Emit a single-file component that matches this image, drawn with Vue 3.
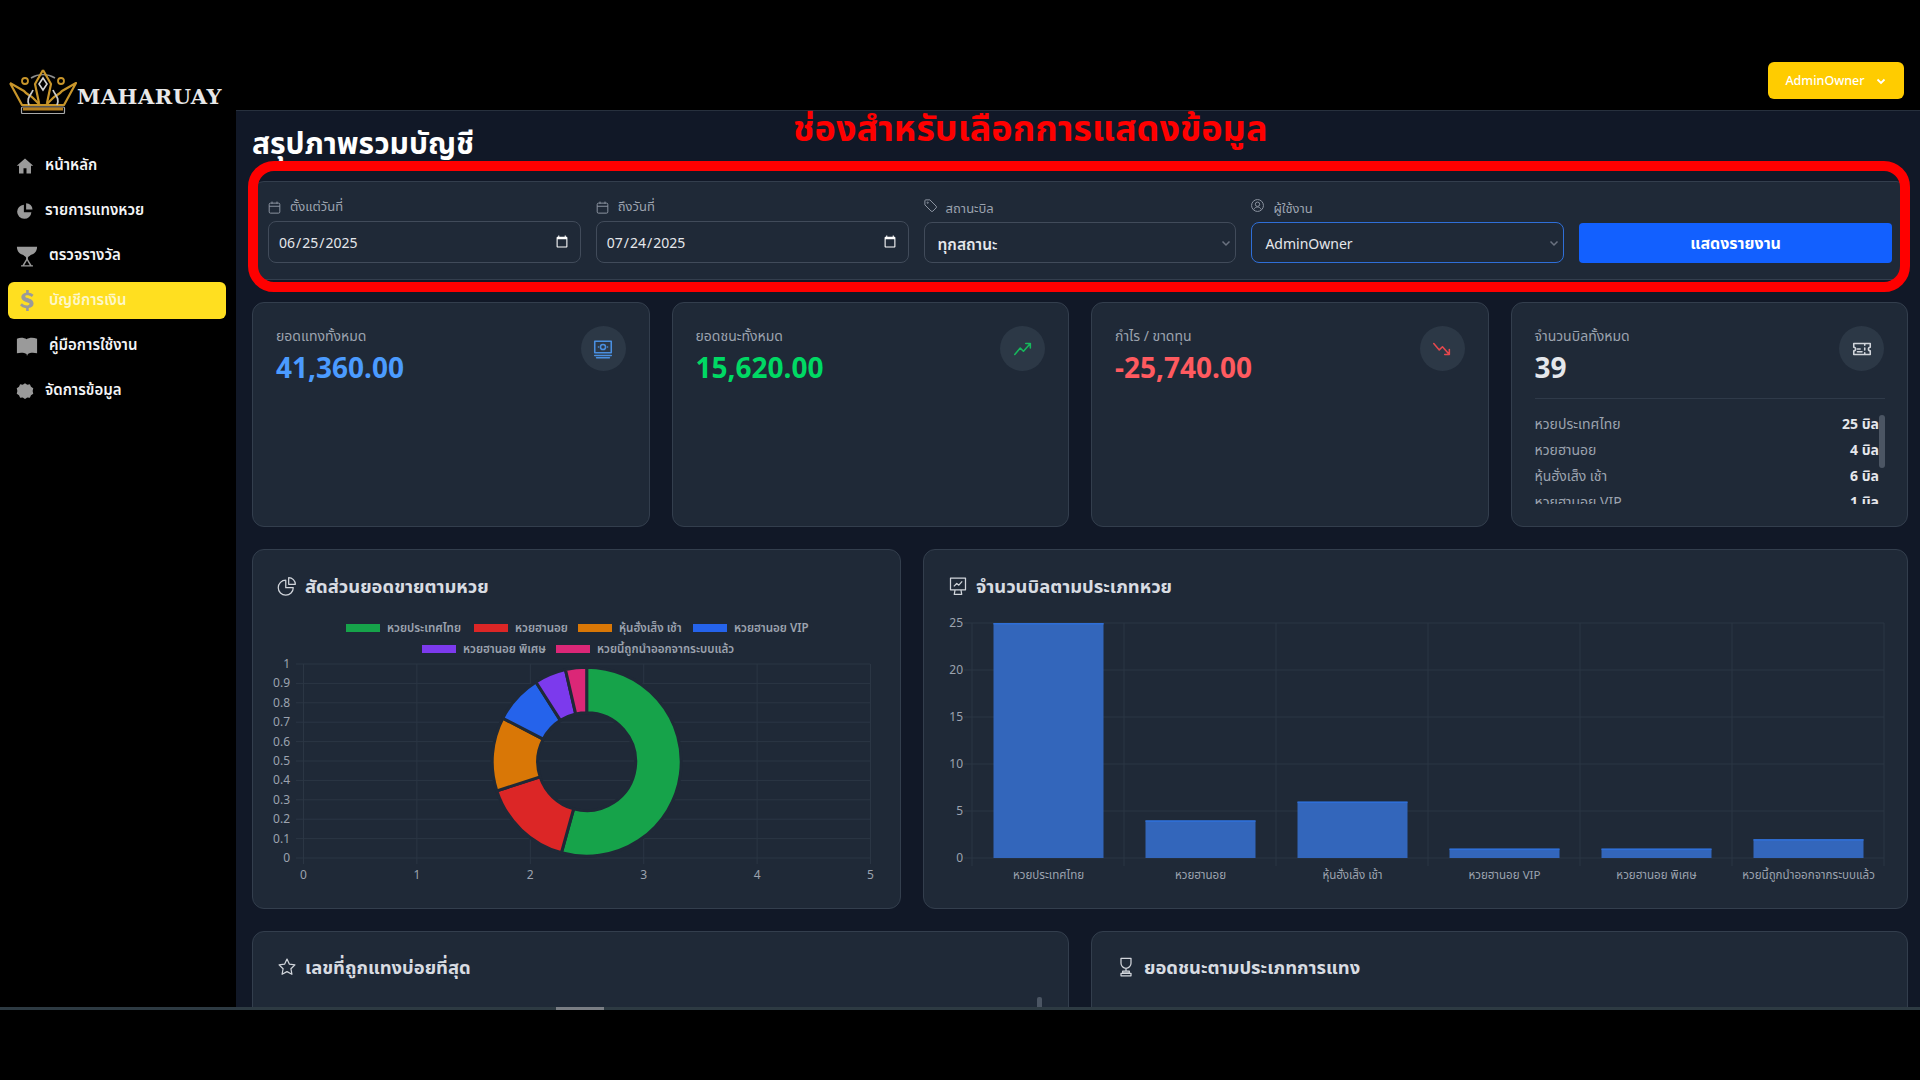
<template>
  <div class="screen">
    <div class="shell">
      <aside class="sidebar">
        <div class="logo">
          <svg class="crown" viewBox="0 0 68 45" fill="none">
            <path d="M22 9 A24 24 0 0 1 46 9" stroke="#8d8d8d" stroke-width="1.6" />
            <path d="M1 14 L13 36 H55 L67 14 L53 22 C50 26 47 26 44 29 L37 36 M1 14 L15 22 C18 26 21 26 24 29 L31 36" stroke="#c8952a" stroke-width="2.2" stroke-linejoin="round" />
            <path d="M34 1 L26 15 L30 34 M34 1 L42 15 L38 34" stroke="#c8952a" stroke-width="2.2" stroke-linejoin="round" />
            <path d="M34 9 L38 15 L34 21 L30 15 Z" stroke="#d5d5d5" stroke-width="1.6" />
            <circle cx="16" cy="12" r="3" stroke="#c8952a" stroke-width="1.8" />
            <circle cx="52" cy="12" r="3" stroke="#c8952a" stroke-width="1.8" />
            <path d="M20 36 C17 29 22 26 24 21 M48 36 C51 29 46 26 44 21" stroke="#c9c9c9" stroke-width="1.8" />
            <rect x="12.5" y="38" width="43" height="6.5" rx="1" stroke="#a9a9a9" stroke-width="1.2" />
            <rect x="14" y="38.5" width="40" height="3" fill="#b67f1e" />
          </svg>
          <span class="logo-text">MAHARUAY</span>
        </div>
        <nav class="nav">
          <a v-for="item in navItems" :key="item.label" class="nav-item" :class="{ active: item.active }">
            <svg class="nav-icon" :style="{ width: item.w + 'px', height: item.h + 'px' }" :viewBox="item.box" fill="currentColor">
              <path :d="item.d" fill-rule="evenodd" />
            </svg>
            <span>{{ item.label }}</span>
          </a>
        </nav>
      </aside>

      <div class="content">
        <header class="topbar">
          <button class="user-btn">
            AdminOwner
            <svg width="12" height="12" viewBox="0 0 12 12" fill="none" stroke="#fff" stroke-width="1.8"><path d="M2.5 4.5 6 8l3.5-3.5" /></svg>
          </button>
        </header>

        <main class="main">
          <h1 class="page-title">สรุปภาพรวมบัญชี</h1>

          <section class="card filter-card">
            <div class="field">
              <label class="field-label up2">
                <svg class="lb-icon" viewBox="0 0 24 24"><rect x="3.5" y="5" width="17" height="16" rx="2" /><path d="M3.5 10h17M8 2.5V6M16 2.5V6" /></svg>
                ตั้งแต่วันที่
              </label>
              <input class="control date" type="date" value="2025-06-25" />
            </div>
            <div class="field">
              <label class="field-label up2">
                <svg class="lb-icon" viewBox="0 0 24 24"><rect x="3.5" y="5" width="17" height="16" rx="2" /><path d="M3.5 10h17M8 2.5V6M16 2.5V6" /></svg>
                ถึงวันที่
              </label>
              <input class="control date" type="date" value="2025-07-24" />
            </div>
            <div class="field">
              <label class="field-label">
                <svg class="lb-icon raised" viewBox="0 0 24 24"><path d="M3 4.5 A1.5 1.5 0 0 1 4.5 3H11l10 10a2 2 0 0 1 0 2.8L15.8 21a2 2 0 0 1-2.8 0L3 11Z" /><circle cx="7.5" cy="7.5" r="1" /></svg>
                สถานะบิล
              </label>
              <select class="control sel thai">
                <option>ทุกสถานะ</option>
              </select>
            </div>
            <div class="field">
              <label class="field-label">
                <svg class="lb-icon raised" viewBox="0 0 24 24"><circle cx="12" cy="12" r="9.5" /><circle cx="12" cy="10" r="3.5" /><path d="M6 18.500c1.500-3 3.500-4 6-4s4.500 1 6 4" /></svg>
                ผู้ใช้งาน
              </label>
              <select class="control sel focus">
                <option>AdminOwner</option>
              </select>
            </div>
            <button class="report-btn">แสดงรายงาน</button>
          </section>

          <section class="stats">
            <div v-for="s in stats" :key="s.label" class="card stat-card">
              <div class="stat-head">
                <div class="stat-text">
                  <div class="stat-label">{{ s.label }}</div>
                  <div class="stat-value" :style="{ color: s.color }">{{ s.value }}</div>
                </div>
                <div class="stat-icon" :style="{ color: s.iconColor }">
                  <svg width="22" height="22" viewBox="0 0 24 24" fill="none" stroke="currentColor" stroke-width="1.7" stroke-linecap="round" stroke-linejoin="round">
                    <path :d="s.icon" />
                  </svg>
                </div>
              </div>
              <div v-if="s.rows" class="stat-list-wrap">
                <div class="stat-list">
                  <div v-for="r in s.rows" :key="r.name" class="stat-row">
                    <span>{{ r.name }}</span>
                    <b>{{ r.count }} บิล</b>
                  </div>
                </div>
                <i class="mini-scroll"></i>
              </div>
            </div>
          </section>

          <section class="charts">
            <div class="card chart-card">
              <h2 class="card-title">
                <svg class="title-icon" viewBox="0 0 24 24"><path d="M10.5 5a9 9 0 1 0 9 9h-9Z" /><path d="M14 2a8 8 0 0 1 8 8h-8Z" /></svg>
                สัดส่วนยอดขายตามหวย
              </h2>
              <svg class="chart-svg pie-svg" viewBox="0 0 649 360" width="649" height="360">
                <g v-for="l in legend" :key="l.name">
                  <rect :x="l.x" :y="l.y" width="34" height="8" :fill="l.color" />
                  <text :x="l.x + 41" :y="l.y + 8" class="legend-text">{{ l.name }}</text>
                </g>
                <line v-for="t in pieYTicks" :key="'py' + t.label" x1="44" x2="618" :y1="t.y" :y2="t.y" class="grid-line" />
                <line v-for="t in pieXTicks" :key="'px' + t.label" :x1="t.x" :x2="t.x" y1="115" y2="315" class="grid-line" />
                <text v-for="t in pieYTicks" :key="'pyl' + t.label" x="38" :y="t.y + 4" text-anchor="end" class="tick">{{ t.label }}</text>
                <text v-for="t in pieXTicks" :key="'pxl' + t.label" :x="t.x" y="330" text-anchor="middle" class="tick">{{ t.label }}</text>
                <path v-for="p in slices" :key="p.color" :d="p.d" :fill="p.color" stroke="#1f2937" stroke-width="3" />
              </svg>
            </div>

            <div class="card chart-card">
              <h2 class="card-title">
                <svg class="title-icon" viewBox="0 0 24 24"><path d="M3 2.5h18v14H3ZM7 12.500l3.500-3.500 2.500 2 4-4.500M8.500 16.500 7.500 22h9l-1-5.500" /></svg>
                จำนวนบิลตามประเภทหวย
              </h2>
              <svg class="chart-svg" viewBox="0 0 985 360" width="985" height="360">
                <line v-for="t in barYTicks" :key="'by' + t.label" x1="41" x2="961" :y1="t.y" :y2="t.y" class="grid-line" />
                <line v-for="x in barXLines" :key="'bx' + x" :x1="x" :x2="x" y1="74" y2="317" class="grid-line" />
                <text v-for="t in barYTicks" :key="'byl' + t.label" x="40" :y="t.y + 4" text-anchor="end" class="tick">{{ t.label }}</text>
                <g v-for="b in bars" :key="b.name">
                  <rect :x="b.x" :y="b.y" width="110" :height="b.h" fill="#3366bb" />
                  <rect :x="b.x" :y="b.y" width="110" height="1.5" fill="#2f6fd8" />
                  <text :x="b.x + 55" y="330" text-anchor="middle" class="tick small">{{ b.name }}</text>
                </g>
              </svg>
            </div>
          </section>

          <section class="bottom-row">
            <div class="card bottom-card">
              <h2 class="card-title">
                <svg class="title-icon" viewBox="0 0 24 24"><path d="m12 2.500 2.900 6.100 6.600.9-4.800 4.600 1.200 6.600L12 17.500l-5.900 3.200 1.200-6.600-4.800-4.600 6.600-.9Z" /></svg>
                เลขที่ถูกแทงบ่อยที่สุด
              </h2>
              <i class="card-scroll"></i>
            </div>
            <div class="card bottom-card">
              <h2 class="card-title">
                <svg class="title-icon" viewBox="0 0 24 24"><path d="M6 1.500h12v6a6 6 0 0 1-12 0ZM12 13.500v3M8 17h8v2H8ZM6 19.500h12v3H6Z" /></svg>
                ยอดชนะตามประเภทการแทง
              </h2>
            </div>
          </section>

          <div class="annotation-frame"></div>
        </main>
      </div>
      <div class="annotation-text">ช่องสำหรับเลือกการแสดงข้อมูล</div>
      <div class="hscroll"><i></i></div>
    </div>
  </div>
</template>

<script setup>
const navItems = [
  { label: 'หน้าหลัก', w: 18, h: 18, box: '0 0 24 24', d: 'M12 2 1 11.500h3V22h16V11.500h3ZM10 15h4v7h-4Z' },
  { label: 'รายการแทงหวย', w: 18, h: 18, box: '0 0 24 24', d: 'M10.500 3.500a9.500 9.500 0 1 0 10 10h-10ZM13.500 1.500v8.500H22a8.500 8.500 0 0 0-8.500-8.500Z' },
  { label: 'ตรวจรางวัล', w: 22, h: 22, box: '0 0 24 24', d: 'M1 2h22c0 5-3 8-7 9-1 1-2.500 2-3 2.500v2L17 22h1.500v1.500h-13V22H7l4-6.500v-2C10.500 13 9 12 8 11 4 10 1 7 1 2ZM12 17l-3 5h6Z' },
  { label: 'บัญชีการเงิน', w: 22, h: 21, box: '0 0 18 24', active: true, d: 'M8 0h3v3c2.500.3 4.500 1.300 5.500 2.500l-2 2.500C13 6.700 11 6 9 6 7.500 6 7 6.700 7 7.300c0 2.200 9.500 1.700 9.500 8 0 2.800-2 4.800-5.500 5.400V24H8v-3.200c-3-.3-5.500-1.500-7-3.300l2.200-2.500c1.500 1.500 3.800 2.600 6 2.600 1.800 0 2.800-.8 2.800-1.800C12 13.500 2.500 14.300 2.500 8c0-2.700 2.200-4.600 5.500-5Z' },
  { label: 'คู่มือการใช้งาน', w: 22, h: 22, box: '0 0 24 24', d: 'M1 4c4-1.500 8-1 10.500.7 2.500-1.700 6.500-2.200 11.500-.7v16c-4-1-8-.7-10 .7L12 23l-.500-2.300C9 19.300 5 19 1 20Z' },
  { label: 'จัดการข้อมูล', w: 18, h: 18, box: '0 0 24 24', d: 'M12 1.500l3 2 3.500-.5 1.500 3.200 3 2-.8 3.800.8 3.800-3 2-1.500 3.200-3.500-.5-3 2-3-2-3.500.5L4 17.800l-3-2 .8-3.800L1 8.200l3-2L5.500 3l3.500.5Z' },
]

const stats = [
  { label: 'ยอดแทงทั้งหมด', value: '41,360.00', color: '#4b9bff', iconColor: '#4a8fe0', icon: 'M3 3.500h18v12.500H3ZM12 7a2.800 2.800 0 1 0 0 5.600A2.800 2.800 0 0 0 12 7ZM7 9.800h.01M17 9.800h.01M3 19h18M5 21.500h14' },
  { label: 'ยอดชนะทั้งหมด', value: '15,620.00', color: '#00d964', iconColor: '#16b85c', icon: 'M3 18l6-7 3.500 3.500L20 6M15 6h5v5' },
  { label: 'กำไร / ขาดทุน', value: '-25,740.00', color: '#ff5a5f', iconColor: '#e5484d', icon: 'M3 6l6 7 3.500-3.500L20 18M20 12.500V18h-5' },
  {
    label: 'จำนวนบิลทั้งหมด',
    value: '39',
    color: '#e5e7eb',
    iconColor: '#d1d5db',
    icon: 'M3 6h18v4a2 2 0 0 0 0 4v4H3v-4a2 2 0 0 0 0-4ZM15 6v2M15 11v2M15 16v2M7 15h5M7 12h3',
    rows: [
      { name: 'หวยประเทศไทย', count: 25 },
      { name: 'หวยฮานอย', count: 4 },
      { name: 'หุ้นฮั่งเส็ง เช้า', count: 6 },
      { name: 'หวยฮานอย VIP', count: 1 },
    ],
  },
]

const legend = [
  { name: 'หวยประเทศไทย', color: '#16a34a', x: 94, y: 75 },
  { name: 'หวยฮานอย', color: '#dc2626', x: 222, y: 75 },
  { name: 'หุ้นฮั่งเส็ง เช้า', color: '#d97706', x: 326, y: 75 },
  { name: 'หวยฮานอย VIP', color: '#2563eb', x: 441, y: 75 },
  { name: 'หวยฮานอย พิเศษ', color: '#7c3aed', x: 170, y: 96 },
  { name: 'หวยนี้ถูกนำออกจากระบบแล้ว', color: '#db2777', x: 304, y: 96 },
]

const pieYTicks = Array.from({ length: 11 }, (_, i) => ({
  label: i === 0 ? '0' : i === 10 ? '1' : (i / 10).toFixed(1),
  y: 309 - i * 19.4,
}))
const pieXTicks = Array.from({ length: 6 }, (_, i) => ({ label: String(i), x: 51.5 + i * 113.4 }))

// donut drawn from the boundary angles, clockwise from the top
const cx = 334.7
const cy = 212.7
const outer = 94.5
const inner = 49
const polar = (r, deg) => {
  const a = ((deg - 90) * Math.PI) / 180
  return `${(cx + r * Math.cos(a)).toFixed(2)} ${(cy + r * Math.sin(a)).toFixed(2)}`
}
const sliceDefs = [
  ['#16a34a', 0, 195.5],
  ['#dc2626', 195.5, 252],
  ['#d97706', 252, 297.4],
  ['#2563eb', 297.4, 327.5],
  ['#7c3aed', 327.5, 347],
  ['#db2777', 347, 360],
]
const slices = sliceDefs.map(([color, from, to]) => {
  const large = to - from > 180 ? 1 : 0
  return {
    color,
    d: `M${polar(outer, from)}A${outer} ${outer} 0 ${large} 1 ${polar(outer, to)}L${polar(inner, to)}A${inner} ${inner} 0 ${large} 0 ${polar(inner, from)}Z`,
  }
})

const barBase = 309
const barYTicks = [25, 20, 15, 10, 5, 0].map((v) => ({ label: String(v), y: barBase - v * 9.4 }))
const barXLines = [49, 201, 353, 505, 657, 809, 961]
const barNames = [
  ['หวยประเทศไทย', 25],
  ['หวยฮานอย', 4],
  ['หุ้นฮั่งเส็ง เช้า', 6],
  ['หวยฮานอย VIP', 1],
  ['หวยฮานอย พิเศษ', 1],
  ['หวยนี้ถูกนำออกจากระบบแล้ว', 2],
]
const bars = barNames.map(([name, v], i) => ({
  name,
  x: 70.5 + i * 152,
  y: barBase - v * 9.4,
  h: v * 9.4,
}))
</script>

<style>
html,
body {
  margin: 0;
  background: #000;
}
</style>

<style scoped>
* {
  box-sizing: border-box;
}

.screen {
  width: 1920px;
  height: 1080px;
  overflow: hidden;
  background: #000;
  font-family: "Noto Sans", "Noto Sans Thai", "Liberation Sans", sans-serif;
  color: #e5e7eb;
}

.shell {
  position: relative;
  display: flex;
  height: 1010px;
  overflow: hidden;
}

.sidebar {
  width: 236px;
  flex-shrink: 0;
  background: #000;
  padding-top: 69px;
}

.logo {
  display: flex;
  align-items: flex-end;
  height: 45px;
  padding-left: 9px;
}

.crown {
  width: 68px;
  height: 45px;
}

.logo-text {
  margin-bottom: 5px;
  font-family: "DejaVu Serif", "Liberation Serif", serif;
  font-weight: 700;
  font-size: 21px;
  line-height: 24px;
  letter-spacing: 0.5px;
  color: #e8e8e8;
}

.nav {
  display: flex;
  flex-direction: column;
  gap: 8px;
  padding: 33px 10px 0 8px;
}

.nav-item {
  display: flex;
  align-items: center;
  gap: 11px;
  height: 37px;
  padding-left: 8px;
  border-radius: 6px;
  font-size: 15px;
  font-weight: 600;
  color: #f3f4f6;
}

.nav-icon {
  flex-shrink: 0;
  color: #9a9a9a;
}

.nav-item.active {
  background: #ffdf20;
  color: #fdf7c8;
}

.content {
  flex: 1;
  min-width: 0;
  display: flex;
  flex-direction: column;
}

.topbar {
  display: flex;
  justify-content: flex-end;
  align-items: flex-start;
  height: 111px;
  padding: 62px 16px 0 0;
  background: #000;
  border-bottom: 1px solid #27303d;
}

.user-btn {
  display: flex;
  align-items: center;
  justify-content: center;
  gap: 10px;
  width: 136px;
  height: 37px;
  border: 0;
  border-radius: 6px;
  background: #ffcc00;
  color: #fff;
  font-family: inherit;
  font-size: 12.5px;
  font-weight: 500;
}

.main {
  position: relative;
  flex: 1;
  min-height: 0;
  overflow: hidden;
  padding: 0 12px 0 16px;
  background: #111827;
}

.page-title {
  margin: 0;
  height: 70px;
  padding-top: 13px;
  font-size: 30px;
  line-height: 38px;
  font-weight: 700;
  color: #fff;
}

.card {
  background: #1f2937;
  border: 1px solid #333e4d;
  border-radius: 12px;
}

.filter-card {
  display: grid;
  grid-template-columns: repeat(5, 1fr);
  gap: 15px;
  align-items: end;
  height: 99px;
  padding: 0 15px 16px;
}

.field {
  display: flex;
  flex-direction: column;
}

.field-label {
  display: flex;
  align-items: center;
  gap: 8px;
  height: 18px;
  margin-bottom: 4px;
  font-size: 13px;
  color: #9ca3af;
}

.field-label.up2 {
  margin-bottom: 5px;
}

.lb-icon {
  width: 15px;
  height: 15px;
  margin-left: -1px;
  fill: none;
  stroke: #8b93a0;
  stroke-width: 1.6;
}

.lb-icon.raised {
  margin-top: -8px;
}

.control {
  width: 100%;
  height: 41px;
  padding: 0 9px;
  border: 1px solid #414b5a;
  border-radius: 8px;
  background-color: #1f2937;
  color: #e5e7eb;
  font-family: inherit;
  font-size: 14px;
  color-scheme: dark;
}

.control.date {
  height: 42px;
}

.sel {
  appearance: none;
  padding-left: 13px;
  padding-top: 2px;
  background-image: url("data:image/svg+xml,%3Csvg xmlns='http://www.w3.org/2000/svg' width='12' height='12' viewBox='0 0 12 12' fill='none' stroke='%236b7280' stroke-width='1.5'%3E%3Cpath d='M2.5 4.5 6 8l3.500-3.500'/%3E%3C/svg%3E");
  background-repeat: no-repeat;
  background-position: right 3px center;
}

.sel.thai {
  font-size: 15.5px;
  font-weight: 600;
}

.sel.focus {
  border-color: #2f6fd8;
}

.report-btn {
  height: 40px;
  padding-top: 2px;
  border: 0;
  border-radius: 4px;
  background: #1260ff;
  color: #fff;
  font-family: inherit;
  font-size: 16px;
  font-weight: 700;
}

.stats {
  display: grid;
  grid-template-columns: repeat(4, 1fr);
  gap: 22px;
  margin-top: 22px;
}

.stat-card {
  height: 225px;
  padding: 23px;
}

.stat-head {
  display: flex;
  justify-content: space-between;
}

.stat-text {
  margin-top: -2px;
}

.stat-label {
  font-size: 14px;
  line-height: 24px;
  color: #9ca3af;
}

.stat-value {
  font-size: 28px;
  line-height: 38px;
  font-weight: 700;
}

.stat-icon {
  display: flex;
  align-items: center;
  justify-content: center;
  width: 45px;
  height: 45px;
  border-radius: 50%;
  background: #2c3846;
}

.stat-list-wrap {
  position: relative;
  margin-top: 12px;
  margin-right: -1px;
  padding-top: 12px;
  border-top: 1px solid #2f3a49;
}

.stat-list {
  display: flex;
  flex-direction: column;
  height: 93px;
  overflow: hidden;
  padding-right: 6px;
}

.stat-row {
  flex-shrink: 0;
  display: flex;
  justify-content: space-between;
  align-items: center;
  height: 26px;
  font-size: 14px;
  color: #9ca3af;
}

.stat-row b {
  color: #e5e7eb;
  font-weight: 700;
}

.mini-scroll {
  position: absolute;
  top: 16px;
  right: 0;
  width: 6px;
  height: 53px;
  border-radius: 3px;
  background: #4b5563;
}

.charts {
  display: grid;
  grid-template-columns: 649px 985px;
  gap: 22px;
  margin-top: 22px;
}

.chart-card {
  height: 360px;
  position: relative;
}

.card-title {
  display: flex;
  align-items: center;
  gap: 8px;
  margin: 0;
  padding: 23px 0 0 24px;
  font-size: 18.4px;
  line-height: 26px;
  font-weight: 700;
  color: #d8dce2;
}

.title-icon {
  width: 20px;
  height: 20px;
  fill: none;
  stroke: #d1d5db;
  stroke-width: 1.5;
  stroke-linejoin: round;
}

.chart-svg {
  position: absolute;
  left: -1px;
  top: -1px;
}

.grid-line {
  stroke: #2b3644;
  stroke-width: 1;
}

.tick {
  font-size: 12px;
  fill: #9ca3af;
}

.tick.small {
  font-size: 11.6px;
}

.legend-text {
  font-size: 11.6px;
  font-weight: 600;
  fill: #9ca3af;
}

.bottom-row {
  display: grid;
  grid-template-columns: repeat(2, 1fr);
  gap: 22px;
  margin-top: 22px;
}

.bottom-card {
  position: relative;
  height: 200px;
}

.bottom-card .card-title {
  padding-top: 22px;
}

.card-scroll {
  position: absolute;
  top: 65px;
  right: 26px;
  width: 5px;
  height: 30px;
  background: #4b5563;
  border-radius: 2px;
}

.annotation-text {
  position: absolute;
  left: 793px;
  top: 107px;
  font-size: 36px;
  line-height: 42px;
  font-weight: 700;
  color: #ff0000;
  white-space: nowrap;
}

.annotation-frame {
  position: absolute;
  left: 12px;
  top: 50px;
  width: 1662px;
  height: 131px;
  border: 10px solid #ff0000;
  border-radius: 26px;
}

.hscroll {
  position: absolute;
  left: 0;
  right: 0;
  bottom: 0;
  height: 3px;
  background: #2d3a42;
}

.hscroll i {
  position: absolute;
  left: 556px;
  top: 0;
  width: 48px;
  height: 3px;
  background: #7a7e84;
}
</style>
